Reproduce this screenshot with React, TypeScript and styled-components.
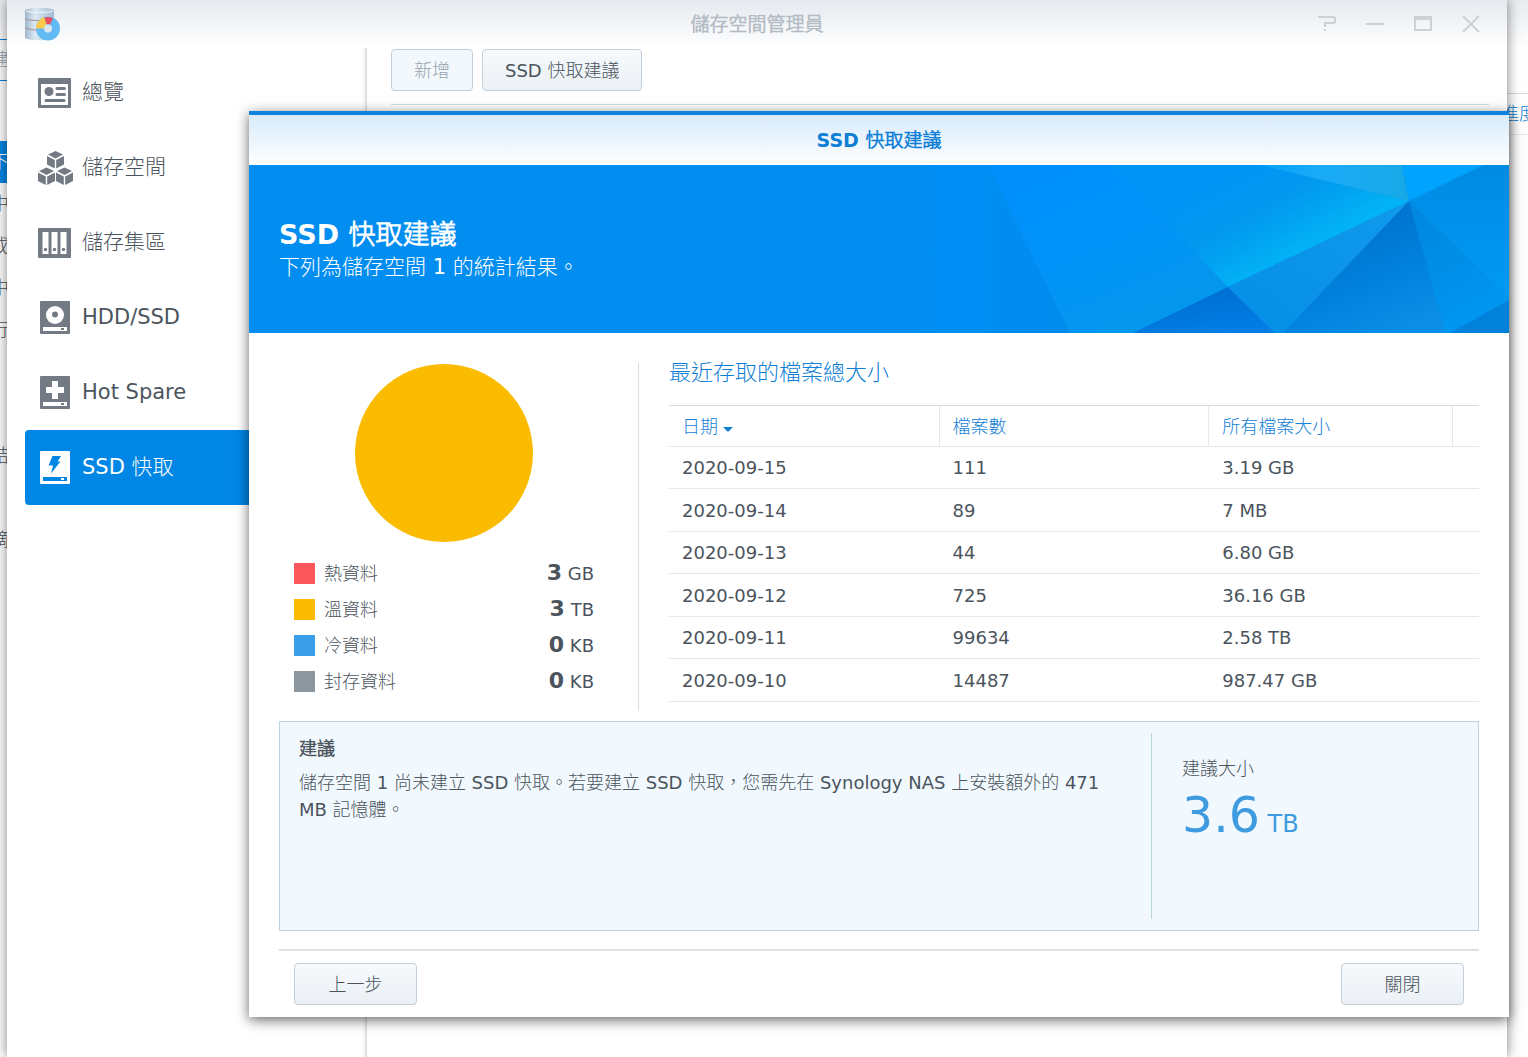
import React from 'react';
import styled, { createGlobalStyle, css } from 'styled-components';

const colors = {
  text: '#4b545d',
  muted: '#98a3ad',
  blue: '#0086e5',
  link: '#0f7fd6',
  line: '#e3e8ec',
  panelLine: '#bcd3e0',
  icon: '#737a84',
};

const GlobalStyle = createGlobalStyle`
  *, *::before, *::after { box-sizing: border-box; }
  body {
    margin: 0;
    overflow: hidden;
    color: ${colors.text};
    background: #fff;
    font-family: Verdana, "DejaVu Sans", "Noto Sans CJK TC Light", "Noto Sans CJK TC", sans-serif;
    font-size: 18px;
    line-height: 27px;
  }
  h1, h2, h3, p, ul, dl, dd { margin: 0; padding: 0; }
  ul { list-style: none; }
  a { color: inherit; text-decoration: none; }
  button { font: inherit; color: inherit; margin: 0; cursor: pointer; }
`;

/* ---------- Desktop and the window behind ---------- */

const Desktop = styled.div`
  position: relative;
  height: 100vh;
  overflow: hidden;
`;

const BackWindow = styled.div`
  position: absolute;
  inset: 0;
  display: flex;
  justify-content: space-between;
  overflow: hidden;
  background: linear-gradient(#e8ecf0, #fff 48px);
`;

const BackNav = styled.div`
  width: 240px;
  margin-left: -9px;
  padding-top: 39px;
  white-space: nowrap;
`;

const BackSearch = styled.div`
  height: 42px;
  margin-bottom: 60px;
  line-height: 40px;
  color: ${colors.muted};
  border-top: 1px solid ${colors.link};
  border-bottom: 1px solid ${colors.link};
`;

const BackItem = styled.li<{ $active?: boolean }>`
  height: 42px;
  line-height: 42px;
  ${(p) => p.$active && css`
    color: #fff;
    background: ${colors.blue};
  `}
`;

const BackColumn = styled.div`
  width: 27px;
  height: 42px;
  margin-top: 93px;
  white-space: nowrap;
  line-height: 40px;
  color: ${colors.link};
  border-top: 1px solid #d3d8dc;
  border-bottom: 1px solid ${colors.line};
`;

/* ---------- Main window ---------- */

const ManagerWindow = styled.main`
  position: absolute;
  inset: 0 21px 0 7px;
  display: flex;
  flex-direction: column;
  background: linear-gradient(#e5e9ee, #fff 48px);
  box-shadow: 0 0 12px rgba(0, 0, 0, 0.5);
`;

const TitleBar = styled.header`
  display: grid;
  grid-template-columns: 1fr auto 1fr;
  align-items: center;
  height: 48px;
  padding: 0 18px;
`;

const WindowTitle = styled.h1`
  font-size: 19px;
  font-weight: 700;
  color: #b3bbc4;
`;

const WindowControls = styled.div`
  display: flex;
  justify-content: flex-end;
  gap: 30px;
  padding-right: 9px;
`;

const ControlButton = styled.button`
  display: flex;
  width: 18px;
  height: 18px;
  padding: 0;
  border: 0;
  background: none;
`;

const WindowBody = styled.div`
  display: flex;
  flex: 1;
`;

const Nav = styled.nav`
  width: 360px;
  padding: 7px 18px;
  background: linear-gradient(to left, #d8dbde 1px, #f2f3f4 2px, #fff 5px);
`;

const NavLink = styled.a<{ $active?: boolean }>`
  display: flex;
  align-items: center;
  gap: 10px;
  height: 75px;
  padding-left: 12px;
  font-size: 21px;
  border-radius: 4px;
  svg { flex: none; }
  ${(p) => p.$active && css`
    color: #fff;
    background: ${colors.blue};
  `}
`;

const Content = styled.section`
  flex: 1;
  padding: 1px 18px 0 24px;
`;

const Toolbar = styled.div`
  display: flex;
  gap: 9px;
  padding-bottom: 13px;
  border-bottom: 1px solid #cfe0ea;
`;

const Button = styled.button<{ $wide?: boolean }>`
  height: 42px;
  min-width: ${(p) => (p.$wide ? '123px' : '81px')};
  padding: 0 22px;
  border: 1px solid #c3cfda;
  border-radius: 4px;
  background: linear-gradient(#f6fafd, #ebf0f5);
  &:disabled { color: ${colors.muted}; background: #f3f8fc; }
`;

/* ---------- Dialog ---------- */

const Dialog = styled.section`
  position: absolute;
  top: 111px;
  left: 249px;
  right: 19px;
  background: #fff;
  border-top: 4px solid #0f82db;
  box-shadow: 0 3px 12px rgba(0, 0, 0, 0.6);
`;

const DialogHeader = styled.header`
  height: 50px;
  line-height: 50px;
  text-align: center;
  background: linear-gradient(#d8ebfb, #fff);
`;

const DialogTitle = styled.h2`
  font-size: 19px;
  font-weight: 700;
  color: ${colors.link};
`;

const Banner = styled.div`
  display: grid;
  height: 168px;
  align-items: center;
  background: #028df0;
  overflow: hidden;
  > * { grid-area: 1 / 1; }
`;

const BannerText = styled.div`
  padding: 2px 0 0 30px;
  color: #fff;
  z-index: 1;
  h3 { font-size: 27px; line-height: 34px; }
  p { font-size: 21px; line-height: 30px; }
`;

const BannerArt = styled.svg`
  justify-self: end;
`;

const DialogBody = styled.div`
  padding: 30px 30px 12px;
`;

const Stats = styled.div`
  display: flex;
  height: 348px;
  margin-bottom: 10px;
`;

const Summary = styled.div`
  width: 360px;
  padding: 1px 44px 0 15px;
  border-right: 1px solid #d5dfe7;
`;

const Pie = styled.svg`
  display: block;
  margin: 0 auto 13px;
`;

const LegendRow = styled.li`
  display: flex;
  align-items: center;
  gap: 9px;
  height: 36px;
`;

const Swatch = styled.span<{ $color: string }>`
  width: 21px;
  height: 21px;
  background: ${(p) => p.$color};
`;

const LegendValue = styled.span`
  margin-left: auto;
  strong { font-size: 22px; }
`;

const Recent = styled.div`
  flex: 1;
  padding-left: 30px;
`;

const RecentTitle = styled.h3`
  height: 42px;
  line-height: 20px;
  font-size: 22px;
  font-weight: 400;
  color: ${colors.link};
`;

const Table = styled.table`
  width: 100%;
  table-layout: fixed;
  border-spacing: 0;
  text-align: left;
  th, td {
    height: 42px;
    padding: 0 13px;
    border-bottom: 1px solid ${colors.line};
  }
  th {
    font-weight: 400;
    color: #1782d6;
    border-top: 1px solid #d6dde2;
    border-right: 1px solid ${colors.line};
  }
  th:last-child { border-right: 0; padding: 0; }
  tbody tr:nth-child(even) td { height: 43px; }
  th svg { margin-left: 5px; }
`;

const Col = styled.col<{ $width: string }>`
  width: ${(p) => p.$width};
`;

const Advice = styled.section`
  display: flex;
  height: 210px;
  margin-bottom: 18px;
  padding: 11px 0;
  border: 1px solid ${colors.panelLine};
  background: #f1f9fe;
`;

const AdviceText = styled.div`
  flex: 1;
  padding: 2px 28px 0 19px;
  h3 { font-size: 18px; margin-bottom: 7px; }
`;

const AdviceSize = styled.div`
  width: 327px;
  padding: 22px 30px;
  border-left: 1px solid ${colors.panelLine};
`;

const SizeValue = styled.p`
  padding-top: 7px;
  font-size: 24px;
  line-height: 54px;
  color: #3f9be0;
  big { font-size: 49px; }
`;

const DialogFooter = styled.footer`
  display: flex;
  justify-content: space-between;
  padding: 14px 15px 0;
  background: linear-gradient(#d3d6d9, #e9ebec 2px, #fff 2px);
`;

/* ---------- Icons ---------- */

const AppIcon = () => (
  <svg width="37" height="34" viewBox="0 0 37 34" aria-hidden="true">
    <defs>
      <linearGradient id="cyl">
        <stop offset="0" stopColor="#9fb6c9" />
        <stop offset="0.35" stopColor="#dce9f4" />
        <stop offset="1" stopColor="#a3bdd3" />
      </linearGradient>
    </defs>
    <path d="M0 3C4 0 25 0 29 3V31C25 34 4 34 0 31Z" fill="url(#cyl)" />
    <path d="M1 4C6 6 23 6 28 4" fill="none" stroke="#f4f9fd" strokeWidth="1" />
    <path d="M0 12C5 14 24 14 29 12M0 21C5 23 12 23 14 23" fill="none" stroke="#a58f96" strokeWidth="1" />
    <circle cx="23" cy="21.500" r="8" fill="none" stroke="#62baf5" strokeWidth="8" />
    <path d="M15 21.500A8 8 0 0 1 20.500 13.900" fill="none" stroke="#fbca4a" strokeWidth="8" />
    <path d="M20.500 13.900A8 8 0 0 1 26.500 14.300" fill="none" stroke="#ea5064" strokeWidth="7" />
    <circle cx="23" cy="21.500" r="4" fill="#d9e6f0" />
  </svg>
);

const OverviewIcon = () => (
  <svg width="35" height="36" viewBox="0 0 35 36" fill={colors.icon} aria-hidden="true">
    <path fillRule="evenodd" d="M2 3H33Q34 3 34 4V32Q34 33 33 33H2Q1 33 1 32V4Q1 3 2 3ZM4 9V30H31V9Z" />
    <circle cx="12" cy="16.500" r="4.500" />
    <path d="M20 13.500h7.500M20 19.500h7.500M9 25.500h18" stroke={colors.icon} strokeWidth="3" strokeLinecap="round" />
  </svg>
);

const Cube = ({ x, y }: { x: number; y: number }) => (
  <g transform={`translate(${x} ${y})`}>
    <path d="M8.500 0L16 3.500L8.500 7.500L1 3.500Z" />
    <path d="M0 5L7.800 9V17.500L0 13.500Z" />
    <path d="M17 5L9.200 9V17.500L17 13.500Z" />
  </g>
);

const VolumeIcon = () => (
  <svg width="35" height="36" viewBox="-1 0 35 36" overflow="visible" fill={colors.icon} aria-hidden="true">
    <Cube x={9} y={1} />
    <Cube x={0} y={17.500} />
    <Cube x={18} y={17.500} />
  </svg>
);

const PoolIcon = () => (
  <svg width="35" height="36" viewBox="0 0 35 36" aria-hidden="true">
    <rect x="1" y="3" width="33" height="30" rx="1" fill={colors.icon} />
    <path d="M5.500 7h6v22h-6zM14.500 7h6v22h-6zM23.500 7h6v22h-6z" fill="#fff" />
    <g fill={colors.icon}>
      <circle cx="8.500" cy="24.500" r="1.700" />
      <circle cx="17.500" cy="24.500" r="1.700" />
      <circle cx="26.500" cy="24.500" r="1.700" />
    </g>
  </svg>
);

const DriveIcon = ({ body = colors.icon, slot = '#fff', children }: {
  body?: string; slot?: string; children: React.ReactNode;
}) => (
  <svg width="35" height="36" viewBox="0 0 35 36" aria-hidden="true">
    <rect x="3" y="1" width="30" height="33" rx="1" fill={body} />
    <path d="M6 27h24v4H6z" fill={slot} />
    <path d="M24 28h3v2h-3z" fill={body} />
    {children}
  </svg>
);

const HddIcon = () => (
  <DriveIcon>
    <circle cx="18" cy="15" r="9" fill="#fff" />
    <circle cx="18" cy="14.500" r="3" fill={colors.icon} />
  </DriveIcon>
);

const SpareIcon = () => (
  <DriveIcon>
    <path d="M15 6h6v6h6v6h-6v6h-6v-6H9v-6h6z" fill="#fff" />
  </DriveIcon>
);

const CacheIcon = () => (
  <DriveIcon body="#fff" slot={colors.blue}>
    <path d="M15.500 6H24L20.500 11.500H23.500L14 23.500L16 15.500H11.500Z" fill={colors.blue} />
  </DriveIcon>
);

const glyph = { width: 18, height: 18, fill: 'none', stroke: '#cdd1d5', strokeWidth: 2, 'aria-hidden': true } as const;

const controls = [
  { label: '說明', icon: <svg {...glyph}><path d="M0 2H15Q17 2 17 4V6Q17 8 15 8H7V12M7 14V16" /></svg> },
  { label: '最小化', icon: <svg {...glyph}><path d="M0 9H18" /></svg> },
  { label: '最大化', icon: <svg {...glyph}><path d="M1 2H17V15H1ZM1 4H17" /></svg> },
  { label: '關閉視窗', icon: <svg {...glyph}><path d="M1 1L17 17M17 1L1 17" /></svg> },
];

const PolygonArt = () => (
  <BannerArt width="649" height="168" viewBox="0 0 649 168" aria-hidden="true">
    <defs>
      <linearGradient id="a1"><stop offset="0" stopColor="#028df0" /><stop offset="0.5" stopColor="#008ef5" /><stop offset="1" stopColor="#008bec" /></linearGradient>
      <linearGradient id="a2" x1="0" y1="0" x2="0.6" y2="1"><stop offset="0" stopColor="#008ffc" /><stop offset="0.5" stopColor="#0092f9" /><stop offset="1" stopColor="#0597ec" /></linearGradient>
      <linearGradient id="a3" gradientUnits="userSpaceOnUse" x1="370" y1="0" x2="425" y2="100"><stop offset="0" stopColor="#0094f6" /><stop offset="0.5" stopColor="#0299ef" /><stop offset="1" stopColor="#02b4f6" /></linearGradient>
      <linearGradient id="a4"><stop offset="0" stopColor="#06a0fb" /><stop offset="0.4" stopColor="#1aabf8" /><stop offset="1" stopColor="#17a9e6" /></linearGradient>
      <linearGradient id="a5" x1="0" y1="1" x2="1" y2="0"><stop offset="0" stopColor="#058ee6" /><stop offset="1" stopColor="#1199ec" /></linearGradient>
      <linearGradient id="a6" x1="0.2" y1="0" x2="0.6" y2="1"><stop offset="0" stopColor="#006cd0" /><stop offset="1" stopColor="#007ee4" /></linearGradient>
      <linearGradient id="a7" x1="0.3" y1="0.2" x2="0.7" y2="1"><stop offset="0" stopColor="#0073cd" /><stop offset="0.5" stopColor="#0080dc" /><stop offset="1" stopColor="#0c8ee7" /></linearGradient>
      <linearGradient id="a8" x1="0" y1="0" x2="0.4" y2="1"><stop offset="0" stopColor="#0086de" /><stop offset="1" stopColor="#0096f0" /></linearGradient>
      <linearGradient id="a9" x1="0" y1="0" x2="0" y2="1"><stop offset="0" stopColor="#008be4" /><stop offset="1" stopColor="#009af4" /></linearGradient>
    </defs>
    <path d="M0 0H128L210 168H0Z" fill="url(#a1)" />
    <path d="M128 0H250L368 122L273 168H210Z" fill="url(#a2)" />
    <path d="M250 0H400L549 36L368 122Z" fill="url(#a3)" />
    <path d="M400 0H542L549 36Z" fill="url(#a4)" />
    <path d="M542 0H624L549 36Z" fill="#00a3fd" />
    <path d="M624 0H649V132L549 36Z" fill="url(#a9)" />
    <path d="M368 122L415 168H273Z" fill="url(#a6)" />
    <path d="M549 36L368 122L415 168H423Z" fill="url(#a5)" />
    <path d="M549 36L423 168H586Z" fill="url(#a7)" />
    <path d="M549 36L586 168H590L649 135V132Z" fill="url(#a8)" />
    <path d="M590 168L649 135V168Z" fill="#0082da" />
  </BannerArt>
);

/* ---------- Data ---------- */

const backItems = ['下', '中', '成', '中', '行', '', '', '結', '', '摘'];

const navItems = [
  { label: '總覽', icon: <OverviewIcon /> },
  { label: '儲存空間', icon: <VolumeIcon /> },
  { label: '儲存集區', icon: <PoolIcon /> },
  { label: 'HDD/SSD', icon: <HddIcon /> },
  { label: 'Hot Spare', icon: <SpareIcon /> },
  { label: 'SSD 快取', icon: <CacheIcon />, active: true },
];

const legend = [
  { label: '熱資料', value: '3', unit: 'GB', color: '#fd575e' },
  { label: '溫資料', value: '3', unit: 'TB', color: '#fabb00' },
  { label: '冷資料', value: '0', unit: 'KB', color: '#3a9ee8' },
  { label: '封存資料', value: '0', unit: 'KB', color: '#8c969f' },
];

const files = [
  ['2020-09-15', '111', '3.19 GB'],
  ['2020-09-14', '89', '7 MB'],
  ['2020-09-13', '44', '6.80 GB'],
  ['2020-09-12', '725', '36.16 GB'],
  ['2020-09-11', '99634', '2.58 TB'],
  ['2020-09-10', '14487', '987.47 GB'],
];

export default function App() {
  return (
    <Desktop lang="zh-Hant">
      <GlobalStyle />
      <BackWindow>
        <BackNav>
          <BackSearch>建</BackSearch>
          <ul>
            {backItems.map((item, i) => (
              <BackItem key={i} $active={i === 0}>{item}</BackItem>
            ))}
          </ul>
        </BackNav>
        <BackColumn>進度</BackColumn>
      </BackWindow>

      <ManagerWindow>
        <TitleBar>
          <AppIcon />
          <WindowTitle>儲存空間管理員</WindowTitle>
          <WindowControls>
            {controls.map((c) => (
              <ControlButton key={c.label} type="button" aria-label={c.label}>{c.icon}</ControlButton>
            ))}
          </WindowControls>
        </TitleBar>
        <WindowBody>
          <Nav>
            {navItems.map((item) => (
              <NavLink key={item.label} href="#" $active={item.active}>
                {item.icon}
                {item.label}
              </NavLink>
            ))}
          </Nav>
          <Content>
            <Toolbar>
              <Button type="button" disabled>新增</Button>
              <Button type="button">SSD 快取建議</Button>
            </Toolbar>
          </Content>
        </WindowBody>
      </ManagerWindow>

      <Dialog role="dialog" aria-labelledby="dialog-title">
        <DialogHeader>
          <DialogTitle id="dialog-title">SSD 快取建議</DialogTitle>
        </DialogHeader>
        <Banner>
          <PolygonArt />
          <BannerText>
            <h3>SSD 快取建議</h3>
            <p>下列為儲存空間 1 的統計結果。</p>
          </BannerText>
        </Banner>
        <DialogBody>
          <Stats>
            <Summary>
              <Pie width="178" height="178" viewBox="0 0 178 178" aria-hidden="true">
                <circle cx="89" cy="89" r="89" fill="#fabb00" />
              </Pie>
              <ul>
                {legend.map((row) => (
                  <LegendRow key={row.label}>
                    <Swatch $color={row.color} />
                    <span>{row.label}</span>
                    <LegendValue><strong>{row.value}</strong> {row.unit}</LegendValue>
                  </LegendRow>
                ))}
              </ul>
            </Summary>
            <Recent>
              <RecentTitle>最近存取的檔案總大小</RecentTitle>
              <Table>
                <colgroup>
                  <Col $width="33.4%" />
                  <Col $width="33.3%" />
                  <Col $width="auto" />
                  <Col $width="26px" />
                </colgroup>
                <thead>
                  <tr>
                    <th scope="col" aria-sort="descending">
                      日期
                      <svg width="10" height="6" viewBox="0 0 10 6" aria-hidden="true">
                        <path d="M0 0H10L5 5Z" fill={colors.link} />
                      </svg>
                    </th>
                    <th scope="col">檔案數</th>
                    <th scope="col">所有檔案大小</th>
                    <th aria-hidden="true" />
                  </tr>
                </thead>
                <tbody>
                  {files.map(([date, count, size]) => (
                    <tr key={date}>
                      <td>{date}</td>
                      <td>{count}</td>
                      <td colSpan={2}>{size}</td>
                    </tr>
                  ))}
                </tbody>
              </Table>
            </Recent>
          </Stats>
          <Advice>
            <AdviceText>
              <h3>建議</h3>
              <p>儲存空間 1 尚未建立 SSD 快取。若要建立 SSD 快取，您需先在 Synology NAS 上安裝額外的 471 MB 記憶體。</p>
            </AdviceText>
            <AdviceSize>
              <p>建議大小</p>
              <SizeValue><big>3.6</big> TB</SizeValue>
            </AdviceSize>
          </Advice>
          <DialogFooter>
            <Button type="button" $wide>上一步</Button>
            <Button type="button" $wide>關閉</Button>
          </DialogFooter>
        </DialogBody>
      </Dialog>
    </Desktop>
  );
}
